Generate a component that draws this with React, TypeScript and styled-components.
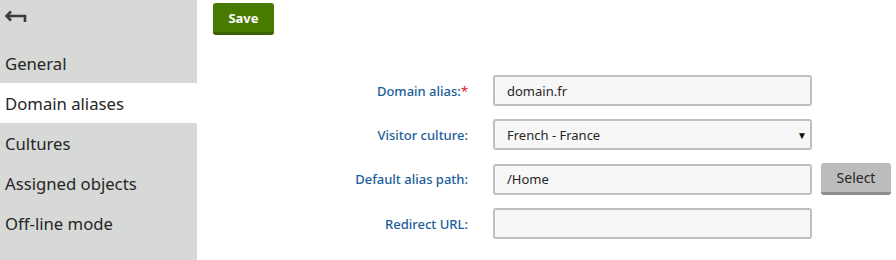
import React from 'react'
import styled, { createGlobalStyle } from 'styled-components'

const GlobalStyle = createGlobalStyle`
  html, body {
    margin: 0;
    padding: 0;
    background: #fff;
    font-family: "Noto Sans", "Open Sans", sans-serif;
  }
`

const Page = styled.div`
  display: flex;
  width: 896px;
  height: 260px;
  overflow: hidden;
`

const Sidebar = styled.nav`
  width: 197px;
  flex-shrink: 0;
  background: #d7d9d6;
  display: flex;
  flex-direction: column;
`

const BackButton = styled.button`
  height: 43px;
  border: 0;
  background: none;
  padding: 9px 0 0 3px;
  display: flex;
  align-items: flex-start;
  cursor: pointer;
`

const MenuItem = styled.a<{ $active?: boolean }>`
  display: flex;
  align-items: center;
  height: 40px;
  padding-left: 5px;
  font-size: 16.7px;
  color: #262626;
  background: ${(p) => (p.$active ? '#fff' : 'transparent')};
  text-decoration: none;
  cursor: pointer;
`

const Content = styled.main`
  flex: 1;
  padding: 3px 0 0 16px;
`

const SaveButton = styled.button`
  width: 61px;
  height: 32px;
  border: 0;
  border-bottom: 3px solid #3a6100;
  border-radius: 3px;
  background: #497a00;
  color: #fff;
  font-family: inherit;
  font-size: 13px;
  font-weight: 700;
  padding: 0;
  cursor: pointer;
`

const Form = styled.div`
  display: grid;
  grid-template-columns: 255px 319px auto;
  column-gap: 25px;
  row-gap: 13px;
  margin-top: 40px;
  align-items: center;
`

const Label = styled.label`
  text-align: right;
  font-size: 13px;
  font-weight: 500;
  color: #1c5d9b;
`

const Required = styled.span`
  color: #e8262f;
`

const Field = styled.div`
  position: relative;
  height: 31px;
  box-sizing: border-box;
  border: 2px solid #bfbfbf;
  border-radius: 3px;
  background: #f7f7f7;
  display: flex;
  align-items: center;
  padding: 0 12px;
  font-size: 13px;
  color: #262626;
`

const Caret = styled.span`
  position: absolute;
  right: 3px;
  top: 7px;
  font-size: 10px;
  color: #111;
`

const SelectButton = styled.button`
  width: 70px;
  height: 32px;
  margin-left: -16px;
  border: 0;
  border-bottom: 3px solid #8e8d8d;
  border-radius: 3px;
  background: #bdbcbc;
  color: #262626;
  font-family: inherit;
  font-size: 14px;
  padding: 0;
  cursor: pointer;
`

const BackIcon = () => (
  <svg width="24" height="16" viewBox="0 0 24 16">
    <path d="M8 2.5 L3.5 7 L8 11.5" fill="none" stroke="#3c3c3c" strokeWidth="2.6" />
    <path d="M4 7 H22 V13" fill="none" stroke="#3c3c3c" strokeWidth="2.6" />
  </svg>
)

const menu = ['General', 'Domain aliases', 'Cultures', 'Assigned objects', 'Off-line mode']

export default function App() {
  return (
    <Page>
      <GlobalStyle />
      <Sidebar>
        <BackButton>
          <BackIcon />
        </BackButton>
        {menu.map((m) => (
          <MenuItem key={m} $active={m === 'Domain aliases'}>{m}</MenuItem>
        ))}
      </Sidebar>
      <Content>
        <SaveButton>Save</SaveButton>
        <Form>
          <Label>Domain alias:<Required>*</Required></Label>
          <Field>domain.fr</Field>
          <span />
          <Label>Visitor culture:</Label>
          <Field>
            French - France
            <Caret>▼</Caret>
          </Field>
          <span />
          <Label>Default alias path:</Label>
          <Field>/Home</Field>
          <SelectButton>Select</SelectButton>
          <Label>Redirect URL:</Label>
          <Field />
          <span />
        </Form>
      </Content>
    </Page>
  )
}
